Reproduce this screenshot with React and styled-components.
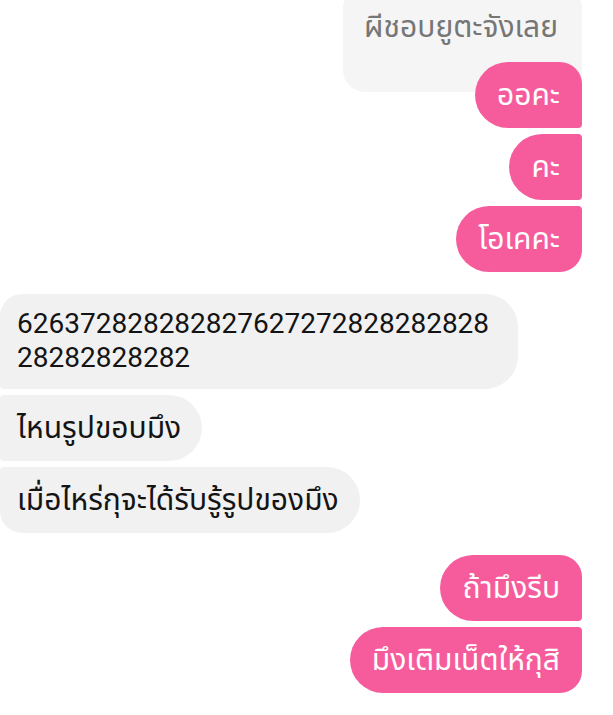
import React from "react"
import styled, { createGlobalStyle, css } from "styled-components"

const GlobalStyle = createGlobalStyle`
  html, body {
    margin: 0;
    padding: 0;
    background: #ffffff;
    overflow: hidden;
  }
  body {
    font-family: Roboto, "Noto Sans Thai", "Noto Sans", "DejaVu Sans", sans-serif;
  }
`

const Thread = styled.div`
  width: 613px;
  height: 715px;
  display: flex;
  flex-direction: column;
  overflow: hidden;
`

const Group = styled.div`
  display: flex;
  flex-direction: column;
  align-items: ${({ $mine }) => ($mine ? "flex-end" : "flex-start")};
  gap: 6px;
  padding: ${({ $mine }) => ($mine ? "0 31px 0 0" : "0")};
  margin-top: ${({ $top }) => $top || "22px"};
`

const Quote = styled.div`
  background: #f5f5f5;
  color: #767676;
  font-size: 30px;
  line-height: 34px;
  padding: 24px 24px 48px 21px;
  margin-top: -14px;
  margin-bottom: -36px;
  border-radius: 22px 22px 4px 22px;
  white-space: nowrap;
`

const radii = {
  mine: {
    first: "33px 22px 4px 33px",
    middle: "33px 4px 4px 33px",
    last: "33px 4px 22px 33px",
  },
  theirs: {
    first: "22px 33px 33px 4px",
    middle: "4px 33px 33px 4px",
    last: "4px 33px 33px 22px",
  },
}

const Bubble = styled.div`
  position: relative;
  font-size: 30px;
  line-height: 34px;
  padding: 16px 22px;
  white-space: nowrap;
  border-radius: ${({ $mine, $pos }) => radii[$mine ? "mine" : "theirs"][$pos]};
  ${({ $mine }) =>
    $mine
      ? css`
          background: #f65c9c;
          color: #ffffff;
        `
      : css`
          background: #f1f1f1;
          color: #141414;
          padding-left: 17px;
          padding-right: 21px;
        `}
`

const LongBubble = styled(Bubble)`
  white-space: normal;
  word-break: break-all;
  width: 476px;
  font-size: 28px;
  padding: 13px 25px 14px 17px;
  border-radius: 22px 33px 33px 4px;
`

export default function App() {
  return (
    <>
      <GlobalStyle />
      <Thread>
        <Group $mine $top="0">
          <Quote>ผีชอบยูตะจังเลย</Quote>
          <Bubble $mine $pos="first">ออคะ</Bubble>
          <Bubble $mine $pos="middle">คะ</Bubble>
          <Bubble $mine $pos="last">โอเคคะ</Bubble>
        </Group>
        <Group>
          <LongBubble>62637282828282762727282828282828282828282</LongBubble>
          <Bubble $pos="middle">ไหนรูปขอบมึง</Bubble>
          <Bubble $pos="last">เมื่อไหร่กุจะได้รับรู้รูปของมึง</Bubble>
        </Group>
        <Group $mine>
          <Bubble $mine $pos="first">ถ้ามึงรีบ</Bubble>
          <Bubble $mine $pos="last">มึงเติมเน็ตให้กุสิ</Bubble>
        </Group>
      </Thread>
    </>
  )
}
